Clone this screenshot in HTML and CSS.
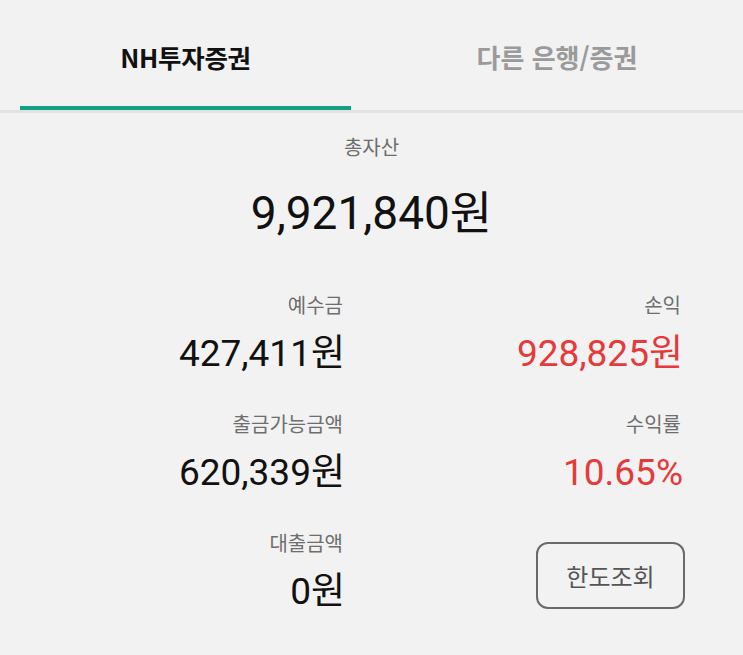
FILE: index.html
```html
<!DOCTYPE html>
<html lang="ko">
<head>
<meta charset="utf-8">
<link rel="stylesheet" href="styles.css">
</head>
<body>
<div class="tabs">
  <div class="tab active"><span>NH투자증권</span></div>
  <div class="tab"><span>다른 은행/증권</span></div>
</div>
<div class="content">
  <div class="total">
    <div class="label">총자산</div>
    <div class="total-value">9,921,840원</div>
  </div>
  <div class="grid">
    <div class="item">
      <div class="label">예수금</div>
      <div class="value">427,411원</div>
    </div>
    <div class="item">
      <div class="label">손익</div>
      <div class="value red">928,825원</div>
    </div>
    <div class="item">
      <div class="label">출금가능금액</div>
      <div class="value">620,339원</div>
    </div>
    <div class="item">
      <div class="label">수익률</div>
      <div class="value red">10.65%</div>
    </div>
    <div class="item">
      <div class="label">대출금액</div>
      <div class="value">0원</div>
    </div>
    <div class="item">
      <button class="limit-btn">한도조회</button>
    </div>
  </div>
</div>
</body>
</html>
```
FILE: styles.css
```css
html, body {
  margin: 0;
  padding: 0;
  background: #f2f2f2;
}
body {
  width: 743px;
  height: 655px;
  overflow: hidden;
  font-family: Roboto, "Noto Sans CJK KR", sans-serif;
  color: #111;
}
.tabs {
  display: grid;
  grid-template-columns: 331px 332px;
  column-gap: 40px;
  padding: 0 20px;
  border-bottom: 3px solid #e2e2e2;
  height: 110px;
}
.tab {
  display: flex;
  align-items: center;
  justify-content: center;
  box-sizing: border-box;
  height: 110px;
  padding-top: 6px;
  border-bottom: 4px solid transparent;
  font-family: "Noto Sans CJK KR", sans-serif;
  font-size: 26px;
  font-weight: 700;
  color: #9a9a9a;
}
.tab.active {
  color: #111;
  font-size: 25.5px;
  letter-spacing: -0.3px;
  border-bottom-color: #14a085;
}
.content {
  padding-top: 22px;
}
.total {
  display: flex;
  flex-direction: column;
  align-items: center;
  gap: 26px;
}
.label {
  font-family: "Noto Sans CJK KR", sans-serif;
  font-size: 20px;
  line-height: 24px;
  color: #6e6e6e;
}
.total-value {
  font-size: 46px;
  line-height: 56px;
  color: #111;
}
.grid {
  display: grid;
  grid-template-columns: 345px 338px;
  row-gap: 36px;
  margin-top: 52px;
}
.item {
  display: flex;
  flex-direction: column;
  align-items: flex-end;
  gap: 15px;
}
.item .label {
  margin-right: 2px;
}
.value {
  font-size: 37px;
  line-height: 44px;
  color: #111;
}
.value.red {
  color: #e53a3a;
}
.limit-btn {
  margin-top: 11px;
  margin-right: -2px;
  width: 149px;
  height: 67px;
  box-sizing: border-box;
  border: 2.5px solid #6a6a6a;
  border-radius: 12px;
  background: transparent;
  font-family: "Noto Sans CJK KR", sans-serif;
  font-size: 24px;
  color: #555;
  padding: 0;
}
```
